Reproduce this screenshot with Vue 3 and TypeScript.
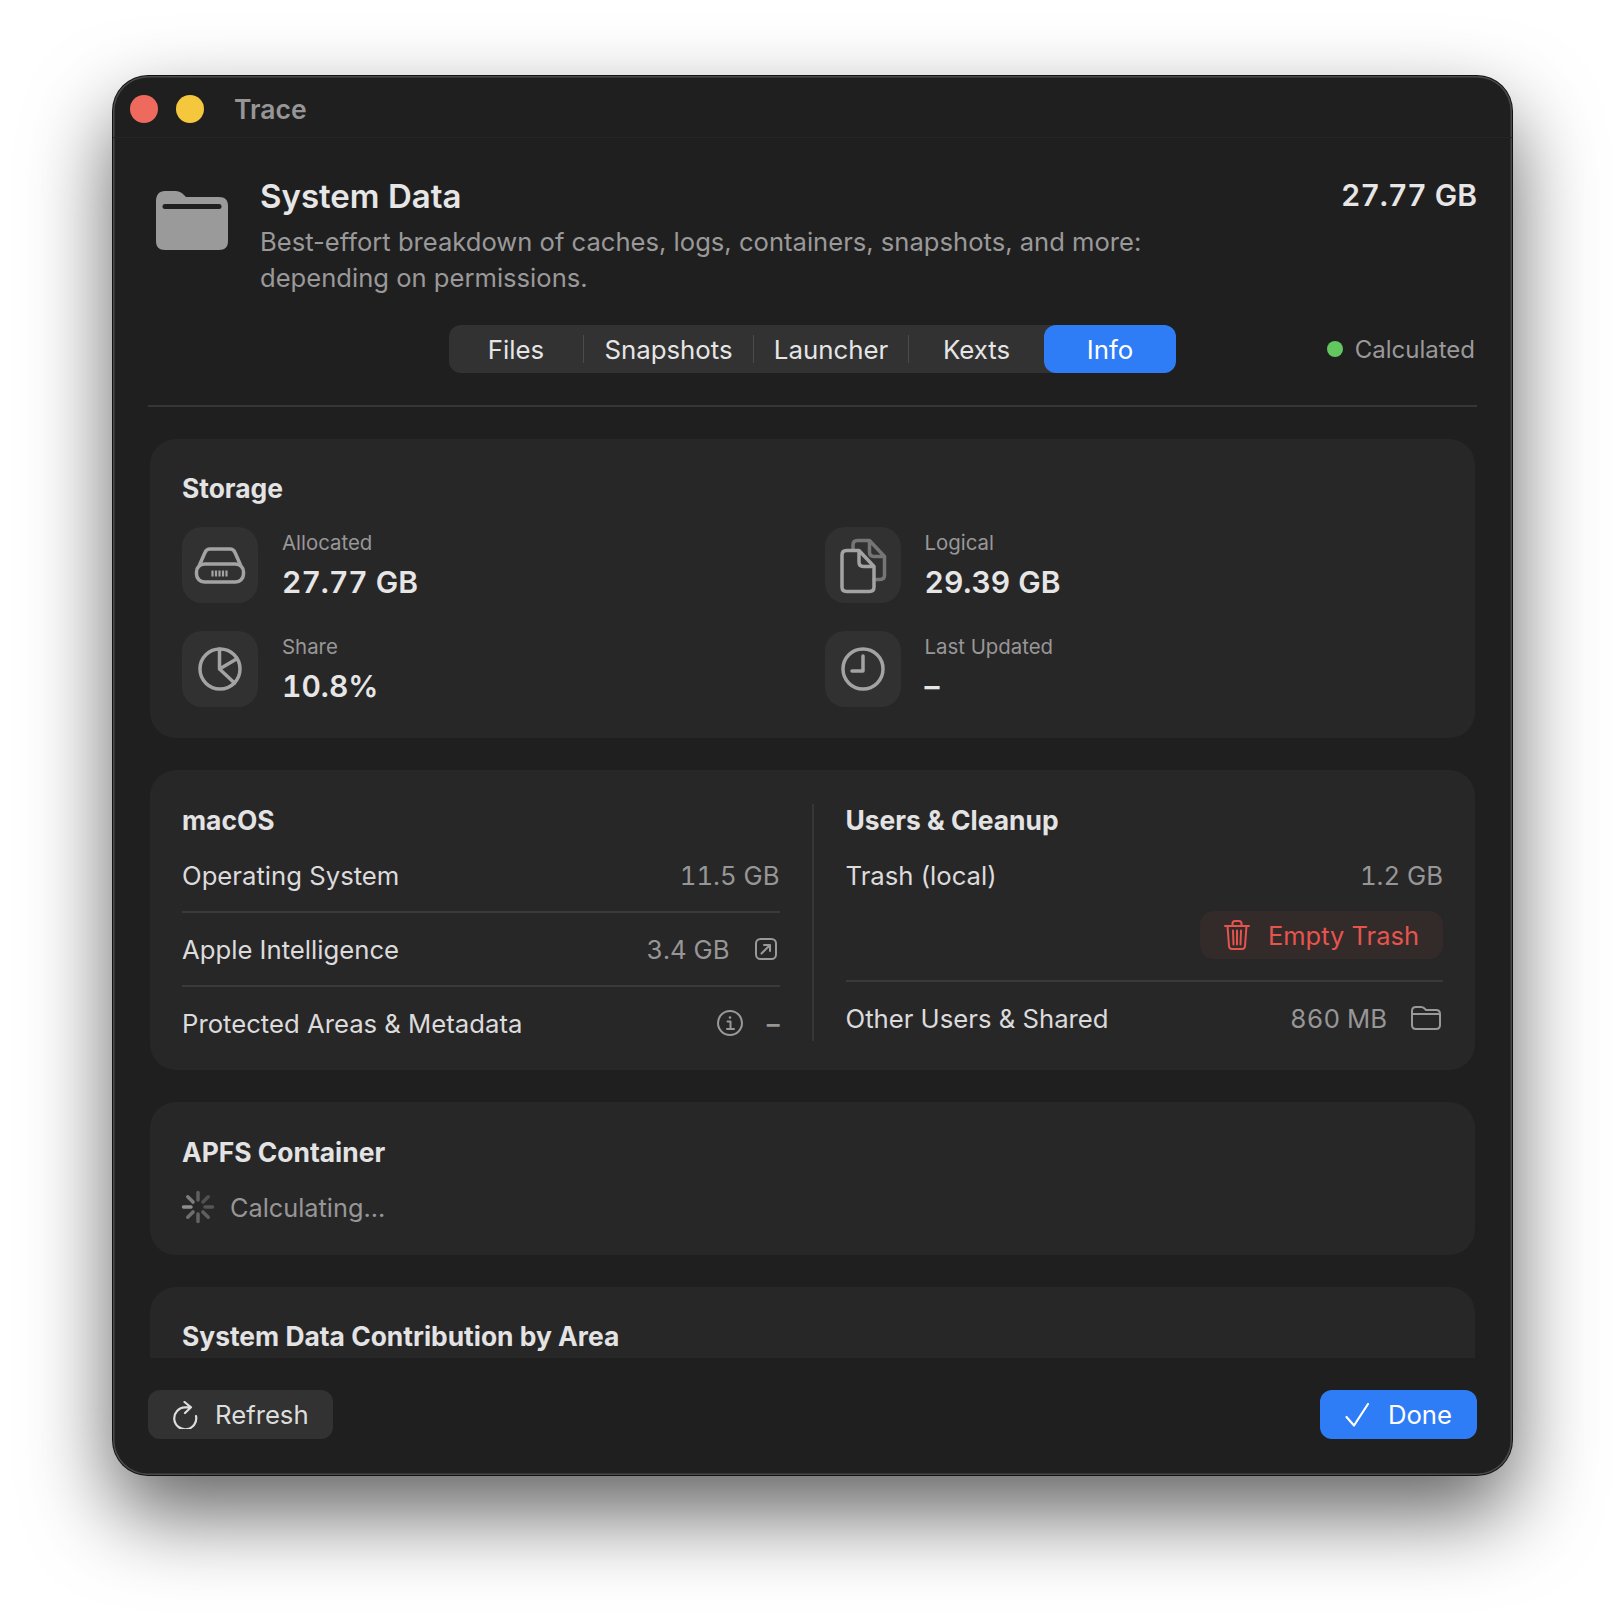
<script setup lang="ts">
  const tabs = [
    { label: 'Files', width: 134 },
    { label: 'Snapshots', width: 169 },
    { label: 'Launcher', width: 154 },
    { label: 'Kexts', width: 135 },
    { label: 'Info', width: 132, active: true },
  ];
  const spokes = [0, 45, 90, 135, 180, 225, 270, 315];
  const spokeOpacity = [0.55, 0.4, 0.45, 0.55, 0.6, 0.7, 1, 0.85];
</script>

<template>
  <div class="page">
    <div class="window">
      <div class="titlebar">
        <span class="light red"></span>
        <span class="light yellow"></span>
        <span class="app-name">Trace</span>
      </div>

      <div class="main">
        <header class="head">
          <svg class="head-icon" width="72" height="60" viewBox="0 0 72 60">
            <path
              fill="#9a9a9a"
              fill-rule="evenodd"
              d="M0 10C0 4 3 0 9 0h9c5 0 7 1 10 4l2 2h33c6 0 9 3 9 9v35c0 6-3 9-9 9H9c-6 0-9-3-9-9Zm9 3a2.5 2.5 0 0 0 0 5h54a2.5 2.5 0 0 0 0-5Z"
            />
          </svg>
          <div class="head-text">
            <h1>System Data</h1>
            <p>Best-effort breakdown of caches, logs, containers, snapshots, and more:<br />depending on permissions.</p>
          </div>
          <div class="head-size">27.77 GB</div>
        </header>

        <div class="tabs-row">
          <div></div>
          <div class="tabs">
            <template v-for="(tab, i) in tabs" :key="tab.label">
              <span class="tab" :class="{ active: tab.active }" :style="{ width: tab.width + 'px' }">{{ tab.label }}</span>
              <span v-if="i < 3" class="tab-sep"></span>
            </template>
          </div>
          <div class="status"><span class="dot"></span>Calculated</div>
        </div>

        <div class="rule"></div>

        <div class="scroll">
          <section class="card storage">
            <h2>Storage</h2>
            <div class="stats">
              <div class="stat">
                <div class="tile">
                  <svg viewBox="0 0 76 76" class="tile-svg">
                    <path d="M17.5 38 23 25.5c1-2.500 2.500-3.500 5-3.500h20c2.500 0 4 1 5 3.500L58.500 38" />
                    <rect x="14.500" y="37" width="47" height="18" rx="8" />
                    <path class="ticks" d="M30.500 43.500v6M34 43.500v6M37.500 43.500v6M41 43.500v6M44.500 43.500v6" />
                  </svg>
                </div>
                <div>
                  <div class="stat-label">Allocated</div>
                  <div class="stat-value">27.77 GB</div>
                </div>
              </div>
              <div class="stat">
                <div class="tile">
                  <svg viewBox="0 0 76 76" class="tile-svg">
                    <path class="dim" d="M32 13.500h12.500l15 16V48c0 3-1.500 4.500-4.500 4.500h-6M28 23v-5c0-3 1.500-4.500 4.500-4.500M44.500 13.500V25c0 3 1.500 4.500 4.500 4.500h10.500" />
                    <path d="M21.500 23.500H34l15 16V60c0 3-1.500 4.500-4.500 4.500h-23c-3 0-4.500-1.500-4.500-4.500V28c0-3 1.500-4.500 4.500-4.500ZM34 23.500V35c0 3 1.500 4.500 4.500 4.500H49" />
                  </svg>
                </div>
                <div>
                  <div class="stat-label">Logical</div>
                  <div class="stat-value">29.39 GB</div>
                </div>
              </div>
              <div class="stat">
                <div class="tile">
                  <svg viewBox="0 0 76 76" class="tile-svg">
                    <circle cx="38" cy="38" r="20" />
                    <path d="M37.500 18v20M37.500 38l17-10M37.500 38l15 14" />
                  </svg>
                </div>
                <div>
                  <div class="stat-label">Share</div>
                  <div class="stat-value">10.8%</div>
                </div>
              </div>
              <div class="stat">
                <div class="tile">
                  <svg viewBox="0 0 76 76" class="tile-svg">
                    <circle cx="38" cy="38" r="20" />
                    <path d="M38 25v15H27" />
                  </svg>
                </div>
                <div>
                  <div class="stat-label">Last Updated</div>
                  <div class="stat-value">–</div>
                </div>
              </div>
            </div>
          </section>

          <section class="card split">
            <div class="col">
              <h2>macOS</h2>
              <div class="row"><span>Operating System</span><span class="muted">11.5 GB</span></div>
              <div class="line"></div>
              <div class="row">
                <span>Apple Intelligence</span>
                <span class="row-end">
                  <span class="muted">3.4 GB</span>
                  <svg class="glyph" width="24" height="24" viewBox="0 0 24 24">
                    <rect x="2" y="2" width="20" height="20" rx="4.500" />
                    <path d="M7.500 16.500 16 8M10 8h6v6" />
                  </svg>
                </span>
              </div>
              <div class="line"></div>
              <div class="row">
                <span>Protected Areas &amp; Metadata</span>
                <span class="row-end">
                  <svg class="glyph" width="26" height="26" viewBox="0 0 26 26">
                    <circle cx="13" cy="13" r="12" />
                    <path d="M10.500 11.500H13.500V19M10 19h7" />
                    <circle class="i-dot" cx="13" cy="7.500" r="1.300" />
                  </svg>
                  <span class="muted dash">–</span>
                </span>
              </div>
            </div>
            <div class="col-sep"></div>
            <div class="col">
              <h2>Users &amp; Cleanup</h2>
              <div class="row"><span>Trash (local)</span><span class="muted">1.2 GB</span></div>
              <button class="empty-trash">
                <svg class="trash" width="26" height="30" viewBox="0 0 26 30">
                  <path d="M1 6h24M8.500 6V3.500C8.500 2 9.500 1 11 1h4c1.500 0 2.500 1 2.500 2.500V6M3.500 6l1.500 20c.2 2 1.200 3 3 3h10c1.800 0 2.800-1 3-3l1.500-20M9 10.500l.5 14M13 10.500v14M17 10.500l-.5 14" />
                </svg>
                Empty Trash
              </button>
              <div class="line wide"></div>
              <div class="row">
                <span>Other Users &amp; Shared</span>
                <span class="row-end">
                  <span class="muted">860 MB</span>
                  <svg class="glyph" width="30" height="24" viewBox="0 0 30 24">
                    <path d="M1 5c0-2.500 1.500-4 4-4h5c1.500 0 2.500.5 3.500 1.500L15 4h10c2.500 0 4 1.500 4 4v11c0 2.500-1.500 4-4 4H5c-2.500 0-4-1.500-4-4ZM1 8h28" />
                  </svg>
                </span>
              </div>
            </div>
          </section>

          <section class="card apfs">
            <h2>APFS Container</h2>
            <div class="calc">
              <svg width="36" height="36" viewBox="0 0 36 36">
                <line
                  v-for="(deg, i) in spokes"
                  :key="deg"
                  x1="18"
                  y1="3.500"
                  x2="18"
                  y2="11"
                  :transform="`rotate(${deg} 18 18)`"
                  :opacity="spokeOpacity[i]"
                />
              </svg>
              <span class="muted">Calculating...</span>
            </div>
          </section>

          <section class="card">
            <h2>System Data Contribution by Area</h2>
          </section>
        </div>

        <footer class="foot">
          <button class="btn plain">
            <svg class="foot-icon" width="26" height="28" viewBox="0 0 26 28">
              <path d="M12.500 1 19 6.300 13 12M19 6.300h-6A11 11 0 1 0 24 15" />
            </svg>
            Refresh
          </button>
          <button class="btn primary">
            <svg class="foot-icon" width="24" height="24" viewBox="0 0 24 24">
              <path d="M1.500 14 9 22.500 23 1" />
            </svg>
            Done
          </button>
        </footer>
      </div>
    </div>
  </div>
</template>

<style scoped>
  .page {
    width: 1624px;
    height: 1624px;
    box-sizing: border-box;
    padding: 76px 0 0 113px;
    background: #fff;
    font-family: Inter, 'Liberation Sans', sans-serif;
    overflow: hidden;
  }

  .window {
    width: 1399px;
    height: 1399px;
    box-sizing: border-box;
    display: flex;
    flex-direction: column;
    background: #201f20;
    border-radius: 35px;
    overflow: hidden;
    box-shadow:
      0 0 0 1px #111,
      inset 0 0 0 1.5px #4a4a4a,
      0 38px 84px rgba(0, 0, 0, 0.62);
  }

  .titlebar {
    flex: none;
    height: 62px;
    box-sizing: border-box;
    display: flex;
    align-items: center;
    padding: 4px 17px 0;
    border-bottom: 1px solid #262526;
  }

  .light {
    width: 28px;
    height: 28px;
    border-radius: 50%;
    margin-right: 18px;
  }

  .red {
    background: #ee6a5f;
  }

  .yellow {
    background: #f5c73d;
  }

  .app-name {
    margin-left: 12px;
    font-size: 26.500px;
    font-weight: 600;
    color: #979696;
  }

  .main {
    flex: 1;
    min-height: 0;
    display: flex;
    flex-direction: column;
    padding: 0 35px;
  }

  .head {
    flex: none;
    display: flex;
    align-items: flex-start;
    padding-top: 38px;
  }

  .head-icon {
    flex: none;
    margin: 15px 32px 0 8px;
  }

  .head-text {
    flex: 1;
  }

  h1 {
    margin: 0;
    font-size: 33px;
    line-height: 40px;
    font-weight: 600;
    color: #e7e6e7;
  }

  .head-text p {
    margin: 8px 0 0;
    font-size: 25.600px;
    line-height: 36px;
    color: #9a9999;
  }

  .head-size {
    font-size: 30px;
    line-height: 38px;
    font-weight: 600;
    font-feature-settings: 'tnum';
    color: #e7e6e7;
  }

  .tabs-row {
    flex: none;
    display: grid;
    grid-template-columns: 1fr auto 1fr;
    align-items: center;
    margin-top: 29px;
  }

  .tabs {
    display: flex;
    align-items: center;
    height: 48px;
    background: #323232;
    border-radius: 12px;
  }

  .tab {
    height: 48px;
    display: flex;
    align-items: center;
    justify-content: center;
    font-size: 25.800px;
    color: #e6e5e6;
    border-radius: 12px;
  }

  .tab.active {
    background: #2f7df6;
    color: #fff;
  }

  .tab-sep {
    width: 1px;
    height: 28px;
    background: #4b4b4b;
  }

  .status {
    justify-self: end;
    display: flex;
    align-items: center;
    gap: 12px;
    margin-right: 2px;
    font-size: 24px;
    color: #9a9999;
  }

  .dot {
    width: 16px;
    height: 16px;
    border-radius: 50%;
    background: #62c75f;
  }

  .rule {
    flex: none;
    height: 2px;
    margin-top: 32px;
    background: #363636;
  }

  .scroll {
    flex: 1;
    min-height: 0;
    margin: 32px 2px 0;
    overflow: hidden;
    display: flex;
    flex-direction: column;
    gap: 32px;
  }

  .card {
    flex: none;
    padding: 33px 32px 31px;
    background: #282728;
    border-radius: 26px;
  }

  h2 {
    margin: 0;
    font-size: 26.400px;
    line-height: 32px;
    font-weight: 700;
    color: #e4e3e4;
  }

  .stats {
    display: grid;
    grid-template-columns: 1fr 1fr;
    gap: 28px 24px;
    margin-top: 23px;
  }

  .stat {
    display: flex;
    align-items: center;
    gap: 24px;
  }

  .tile {
    flex: none;
    width: 76px;
    height: 76px;
    border-radius: 20px;
    background: #323132;
  }

  .tile-svg {
    display: block;
    width: 76px;
    height: 76px;
    fill: none;
    stroke: #a3a3a3;
    stroke-width: 3.5;
    stroke-linecap: round;
    stroke-linejoin: round;
  }

  .tile-svg .ticks {
    stroke-width: 2.200;
    stroke-linecap: butt;
  }

  .tile-svg .dim {
    stroke: #757575;
  }

  .stat-label {
    font-size: 20.400px;
    line-height: 26px;
    color: #989797;
  }

  .stat-value {
    margin-top: 7px;
    font-size: 30px;
    line-height: 38px;
    font-weight: 600;
    font-feature-settings: 'tnum';
    color: #e7e6e7;
  }

  .split {
    display: grid;
    grid-template-columns: 1fr 2px 1fr;
    column-gap: 32px;
    padding-top: 34px;
    padding-bottom: 29px;
  }

  .col-sep {
    background: #363636;
  }

  .row {
    height: 36px;
    margin-top: 18px;
    display: flex;
    align-items: center;
    justify-content: space-between;
    font-size: 25.700px;
    color: #dcdbdc;
  }

  h2 + .row {
    margin-top: 21px;
  }

  .row-end {
    display: flex;
    align-items: center;
    gap: 24px;
  }

  .row-end .glyph:last-child {
    margin-right: 2px;
  }

  .muted {
    color: #979696;
    font-feature-settings: 'tnum';
  }

  .dash {
    font-weight: 600;
  }

  .line {
    height: 2px;
    margin-top: 18px;
    background: #3a3a3a;
  }

  .line.wide {
    margin-top: 21px;
  }

  .line.wide + .row {
    margin-top: 18px;
  }

  .glyph {
    flex: none;
    fill: none;
    stroke: #9a9999;
    stroke-width: 2;
    stroke-linecap: round;
    stroke-linejoin: round;
  }

  .glyph .i-dot {
    fill: #9a9999;
    stroke: none;
  }

  .empty-trash {
    display: flex;
    align-items: center;
    gap: 18px;
    height: 48px;
    margin: 18px 0 0 auto;
    padding: 0 24px;
    border: 0;
    border-radius: 14px;
    background: #332a2a;
    color: #e5554d;
    font: inherit;
    font-size: 25.500px;
  }

  .trash {
    fill: none;
    stroke: #e5554d;
    stroke-width: 2;
    stroke-linecap: round;
    stroke-linejoin: round;
  }

  .apfs {
    padding-top: 34px;
    padding-bottom: 30px;
  }

  .calc {
    display: flex;
    align-items: center;
    gap: 14px;
    height: 36px;
    margin: 21px 0 0 -2px;
    font-size: 25.300px;
  }

  .calc .muted {
    font-feature-settings: normal;
  }

  .calc svg {
    stroke: #8e8d8d;
    stroke-width: 3.500;
    stroke-linecap: round;
  }

  .foot {
    flex: none;
    display: flex;
    align-items: flex-start;
    justify-content: space-between;
    padding: 32px 0 36px;
  }

  .btn {
    display: flex;
    align-items: center;
    height: 49px;
    border: 0;
    border-radius: 12px;
    font: inherit;
    font-size: 25.700px;
  }

  .foot-icon {
    flex: none;
    fill: none;
    stroke-width: 2.2;
    stroke-linecap: round;
    stroke-linejoin: round;
  }

  .plain {
    gap: 17px;
    padding: 0 24px;
    background: #323232;
    color: #dedddd;
  }

  .plain .foot-icon {
    stroke: #dedddd;
  }

  .primary {
    gap: 19px;
    padding: 0 25px;
    background: #2f7df6;
    color: #fff;
  }

  .primary .foot-icon {
    stroke: #fff;
  }
</style>
